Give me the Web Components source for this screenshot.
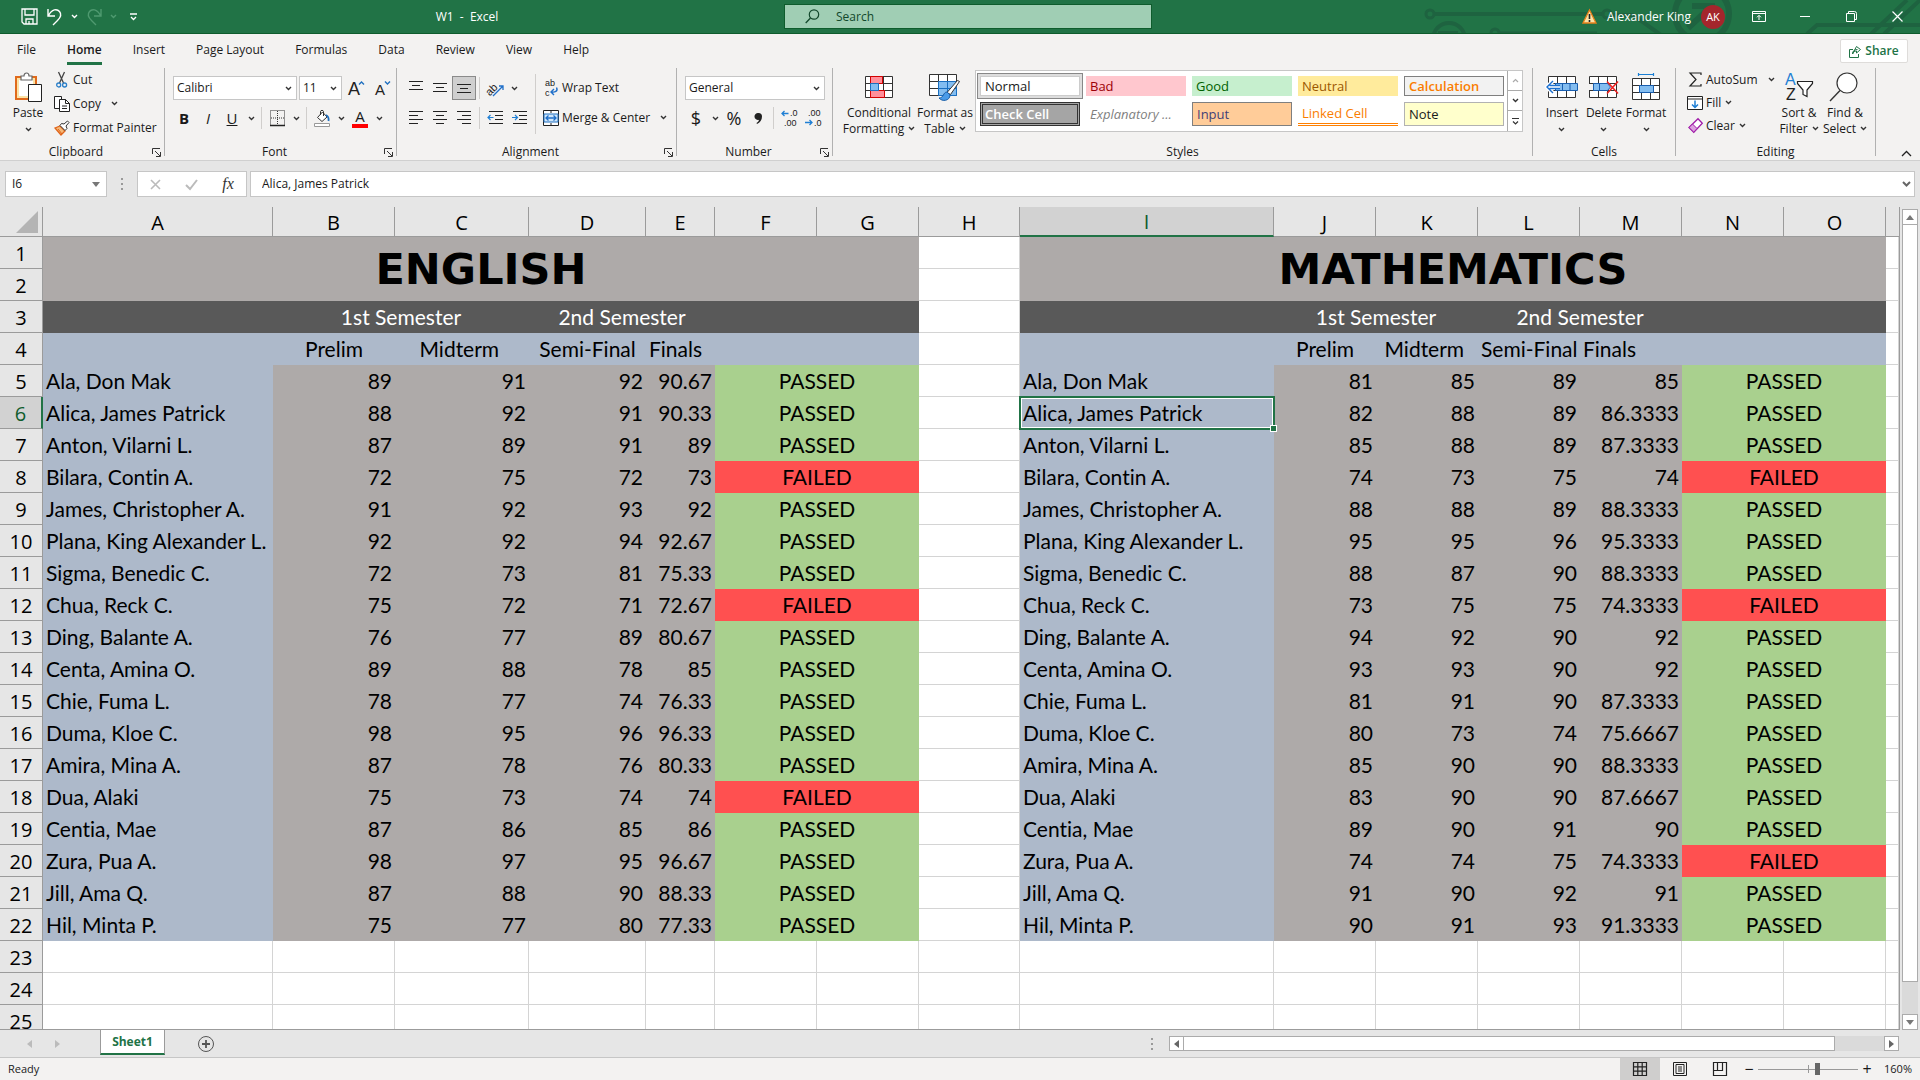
<!DOCTYPE html>
<html lang="en">
<head>
<meta charset="utf-8">
<title>W1 - Excel</title>
<style>
    html, body {
        margin: 0;
        height: 100%;
    }
    body {
        display: flex;
        flex-direction: column;
        overflow: hidden;
        background: #e6e6e6;
        color: #1a1a1a;
        font: 12px/16px "Open Sans", "Noto Sans", sans-serif;
        --green: #217346;
        --line: #c6c6c6;
    }
    sheet-grid {
        flex: 1;
        min-height: 0;
    }
</style>
</head>
<body>
<title-bar></title-bar>
<ribbon-tabs active="Home"></ribbon-tabs>
<ribbon-bar></ribbon-bar>
<formula-bar cell="I6" value="Alica, James Patrick"></formula-bar>
<sheet-grid></sheet-grid>
<sheet-tabs></sheet-tabs>
<status-bar></status-bar>

<script>
/** Icons: [width, height, markup] */
const chev = "M1 1l2.5 2.5L6 1";
const grid = (x, y) => `<path d="M${x} ${y}h27v21h-27zM${x} ${y + 7}h27M${x} ${y + 14}h27M${x + 9} ${y}v21M${x + 18} ${y}v21" fill="#fff" stroke="#333"/>`;
const bars = (rows) => rows.map(([x, y, w]) => `<path d="M${x} ${y}h${w}" stroke="#222"/>`).join("");
const letters = (x, y, size, text, fill = "#222") => `<text x="${x}" y="${y}" font-family="Liberation Sans" font-size="${size}" fill="${fill}">${text}</text>`;
const icons = {
    chevron: [7, 5, `<path d="${chev}" stroke="#333" stroke-width="1.4"/>`],
    chevronWhite: [7, 5, `<path d="${chev}" stroke="#fff" stroke-width="1.4"/>`],
    chevronDim: [7, 5, `<path d="${chev}" stroke="#4f9a70" stroke-width="1.4"/>`],
    chevronUp: [7, 5, `<path d="M1 4l2.5-2.5L6 4" stroke="#aaa" stroke-width="1.2"/>`],
    chevronBold: [9, 6, `<path d="M1 1l3.5 3.5L8 1" stroke="#666" stroke-width="2"/>`],
    collapse: [11, 7, `<path d="M1 6l4.500-4.500L10 6" stroke="#222" stroke-width="1.3"/>`],
    more: [9, 9, `<path d="M1 1.5h7M2 4.5l2.5 2.5L7 4.500" stroke="#333" stroke-width="1.2"/>`],
    moreWhite: [9, 8, `<path d="M1 1h7M2 4l2.5 2.5L7 4" stroke="#fff" stroke-width="1.3"/>`],
    triDown: [8, 5, `<path d="M0 0h8L4 5z" fill="#777"/>`],
    triUp: [8, 5, `<path d="M0 5h8L4 0z" fill="#777"/>`],
    triLeft: [5, 8, `<path d="M5 0v8L0 4z" fill="#666"/>`],
    triRight: [5, 8, `<path d="M0 0v8l5-4z" fill="#666"/>`],
    triLeftDim: [5, 8, `<path d="M5 0v8L0 4z" fill="#bbb"/>`],
    triRightDim: [5, 8, `<path d="M0 0v8l5-4z" fill="#bbb"/>`],
    dots: [2, 12, `<path d="M0 1h2M0 6h2M0 11h2" stroke="#999" stroke-width="2"/>`],
    save: [17, 17, `<path d="M1 1h15v15H3l-2-2zM4 1v6h9V1M5 16v-5h7v5M8 13v3" stroke="#fff" stroke-width="1.3"/>`],
    undo: [16, 18, `<path d="M1 1v7h7M1.5 7.5C5 1 10 .5 12.5 3.5s1 6-2 9L6 17" stroke="#fff" stroke-width="1.4"/>`],
    redo: [16, 18, `<path d="M15 1v7H8M14.500 7.500C11 1 6 .5 3.5 3.5s-1 6 2 9L10 17" stroke="#4f9a70" stroke-width="1.4"/>`],
    search: [15, 15, `<circle cx="9" cy="5.5" r="4.700" stroke="#12482b" stroke-width="1.2"/><path d="M5.500 9L.7 14" stroke="#12482b" stroke-width="1.3"/>`],
    warning: [15, 15, `<path d="M7.500 1L14 14H1z" fill="#fbe3a6" stroke="#e8801a" stroke-width="1.3"/><path d="M7.500 5v5M7.500 11v2" stroke="#222" stroke-width="1.6"/>`],
    display: [14, 11, `<path d="M.5.5h13v10H.5zM.5 2.5h13M7 9V4.500M5 6.300l2-2 2 2" stroke="#fff"/>`],
    minimise: [11, 11, `<path d="M0 5.5h10" stroke="#fff"/>`],
    restore: [11, 11, `<path d="M.5 2.5h8v8h-8zM2.5 2.5v-2h6a2 2 0 0 1 2 2v6h-2" stroke="#fff"/>`],
    close: [11, 11, `<path d="M.5.5l10 10M10.500.5l-10 10" stroke="#fff" stroke-width="1.2"/>`],
    share: [12, 13, `<path d="M4 4.500H.5v8h9V9M3.500 9c0-3 2-4.500 5-4.500M7.500 1.500l4 3-4 3.500V6C5.500 6 4.500 7 3.500 9z" stroke="#217346"/>`],
    paste: [28, 30, `<path d="M2 5h20v22H2z" fill="#fbe3a6" stroke="#e06a1c" stroke-width="2"/><path d="M5 8h14v16H5z" fill="#fff"/><path d="M7 8V4h3c0-4 5-4 5 0h3v4z" fill="#fff" stroke="#666" stroke-width="1.2"/><path d="M14.500 12.500h13v17h-13z" fill="#fff" stroke="#222"/>`],
    cut: [12, 16, `<path d="M2.500 0l5 11M8.500 0l-5 11" stroke="#444" stroke-width="1.3"/><circle cx="2.700" cy="13" r="2" stroke="#2a7fc9" stroke-width="1.3"/><circle cx="8.600" cy="13" r="2" stroke="#2a7fc9" stroke-width="1.3"/>`],
    copy: [16, 16, `<path d="M.5.5h7v12h-7z" fill="#fff" stroke="#222"/><path d="M5.500 3.500h6l4 4v8h-10z" fill="#fff" stroke="#222"/><path d="M11.500 3.500v4h4M8 10h5M8 12.500h5" stroke="#222"/>`],
    painter: [16, 16, `<path d="M1 8l5-2 5 5-4 4z" fill="#f5b878" stroke="#e0641a" stroke-width="1.3"/><path d="M4 9l4 5" stroke="#e0641a"/><path d="M6 5.500l5 5 2-2-1-2.500 3-3.500L13.500 1l-3.500 3-2.500-.5z" fill="#fff" stroke="#333"/>`],
    grow: [17, 17, letters(0, 15, 18, "A") + `<path d="M11 4.500l2.500-2.500L16 4.500" stroke="#1f6fbf" stroke-width="1.4"/>`],
    shrink: [17, 17, letters(1, 15, 15, "A") + `<path d="M11 1.500l2.500 2.500L16 1.500" stroke="#1f6fbf" stroke-width="1.4"/>`],
    borders: [15, 17, `<path d="M.5.5h14v15H.5zM7.500 1v15M1 8h14" stroke="#333" stroke-dasharray="1 1"/><path d="M0 15.500h15" stroke="#222" stroke-width="1.5"/>`],
    fill: [16, 17, `<path d="M3.500 7.500L8.500 2l4.500 5-5 4.500z" fill="#fff" stroke="#333"/><path d="M6.500 5V1.500c0-1.500 3-1.500 3 0V6" stroke="#333"/><path d="M12 5c2 1 3 3 2.500 6" stroke="#1f6fbf" stroke-width="1.8"/><path d="M.5 13.500h15v3H.5z" fill="#fff" stroke="#999"/>`],
    comma: [9, 13, `<path d="M4.500 1a3.500 3.500 0 0 1 3.500 3.500c0 3.500-2 6-5 7.500l-.5-1C4 10 5 9 5 7.800A3.500 3.500 0 1 1 4.500 1z" fill="#222"/>`],
    rotate: [17, 17, `<text x="-2" y="11" transform="rotate(-45 7 8)" font-family="Liberation Sans" font-size="11" fill="#222">ab</text><path d="M6 16L16 6M12 6h4v4" stroke="#1f6fc9" stroke-width="1.3"/>`],
    wrap: [14, 18, letters(1, 7, 9, "ab") + letters(1, 17, 9, "c") + `<path d="M12.500 8.500c2 4-2 5-5 4.500M10 10l-3 3 3 3" stroke="#1f6fc9" stroke-width="1.4"/>`],
    merge: [16, 16, `<path d="M.5.5h15v15H.5zM8 0v3M8 13v3" fill="#fff" stroke="#222"/><path d="M1 4h14v8H1z" fill="#cfe6fa" stroke="#1f6fbf"/><path d="M3 8h10M5.500 5.500L3 8l2.500 2.500M10.500 5.500L13 8l-2.500 2.500" stroke="#1f6fc9" stroke-width="1.3"/>`],
    top: [14, 16, bars([[0, 1.5, 14], [3, 5.5, 8], [0, 9.5, 14]])],
    middle: [14, 12, bars([[0, 1.5, 14], [3, 5.5, 8], [0, 9.5, 14]])],
    bottom: [14, 12, bars([[0, 2.5, 14], [3, 6.5, 8], [0, 10.5, 14]])],
    left: [14, 14, bars([[0, .5, 14], [0, 4.5, 9], [0, 8.5, 14], [0, 12.5, 9]])],
    center: [14, 14, bars([[0, .5, 14], [3, 4.5, 8], [0, 8.5, 14], [3, 12.5, 8]])],
    right: [14, 14, bars([[0, .5, 14], [5, 4.5, 9], [0, 8.5, 14], [5, 12.5, 9]])],
    outdent: [15, 14, bars([[1, .5, 14], [7, 4.5, 8], [7, 8.5, 8], [1, 12.5, 14]]) + `<path d="M5.500 6.500H0M2.500 4L0 6.500 2.500 9" stroke="#1f7fd4" stroke-width="1.2"/>`],
    indent: [15, 14, bars([[1, .5, 14], [7, 4.5, 8], [7, 8.5, 8], [1, 12.5, 14]]) + `<path d="M0 6.500h5.500M3 4l2.500 2.500L3 9" stroke="#1f7fd4" stroke-width="1.2"/>`],
    incDecimal: [16, 18, letters(9, 7, 9, ".0") + letters(3, 17, 9, ".00") + `<path d="M7.500 4.500H1M3.500 2L1 4.500 3.500 7" stroke="#1f7fd4" stroke-width="1.3"/>`],
    decDecimal: [16, 18, letters(3, 7, 9, ".00") + letters(9, 17, 9, ".0") + `<path d="M0 13.500h7M4.500 11L7 13.500 4.500 16" stroke="#1f7fd4" stroke-width="1.3"/>`],
    launcher: [9, 9, `<path d="M.5 6V.5H8M3 3l5 5M8.500 4v4.500H4" stroke="#333"/>`],
    conditional: [28, 22, grid(.5, .5) + `<path d="M5.500.5h12v7h-12zM5.500 14.500h14v7h-14z" fill="#ff8f9a" stroke="#d40000"/><path d="M5.500 7.500h8v7h-8z" fill="#83bdf0" stroke="#1a6fc0"/>`],
    formatTable: [32, 28, `${grid(.5, 1.5)}<path d="M9.500 8.500h18v14h-18z" fill="#83bdf0" stroke="#1a6fc0"/><path d="M9.500 15.500h18M18.500 8.500v14" stroke="#1a6fc0"/><path d="M28.500 7.500l2 1-9 13-3.500-2z" fill="#fff" stroke="#333"/><path d="M18 19c-4 0-3 6-8 6 3 4 11 3 11-3z" fill="#4a9be8" stroke="#1a5fa8"/>`],
    insert: [32, 24, `${grid(2.5, 1.5)}<path d="M9.500 8.500h22v7h-22z" fill="#83bdf0" stroke="#1a5fb0"/><path d="M16.500 8.500v7M24 8.500v7" stroke="#1a5fb0"/><path d="M14 12H1.500M7 6l-6 6 6 6" stroke="#fff" stroke-width="4"/><path d="M14 10.500H3.500M14 13.500H3.500M7 6l-6 6 6 6" stroke="#1a6fd0" stroke-width="1.4"/>`],
    remove: [32, 24, `${grid(1.5, 1.5)}<path d="M0 9h5v6H0z" fill="#f3f2f1"/><path d="M5.500 8.500h14l3 3.500-3 3.500h-14z" fill="#83bdf0" stroke="#1a5fb0"/><path d="M11.500 8.500v7" stroke="#1a5fb0"/><path d="M19 6.500l11 12M30 6.500l-11 12" stroke="#e22" stroke-width="1.6"/>`],
    format: [28, 28, `${grid(.5, 5.5)}<path d="M7.500 12.500h14v7h-14z" fill="#83bdf0" stroke="#1a5fb0"/><path d="M6.500 1.500h15M6.500 0v3M21.500 0v3" stroke="#1a7fd4" stroke-width="1.2"/>`],
    sum: [13, 15, `<path d="M12 3V1H1l6 6.500L1 14h11v-2" stroke="#222" stroke-width="1.2"/>`],
    fillDown: [16, 14, `<path d="M.5.5h15v13H.5zM.5 3h15" fill="#fff" stroke="#222"/><path d="M8 4.500v7M5 8.500l3 3 3-3" stroke="#1f7fd4" stroke-width="1.5"/>`],
    clear: [15, 15, `<path d="M10 .7l4.300 4.500-8.500 9L1 9.500z" fill="#fff" stroke="#a01ba8" stroke-width="1.3"/><path d="M4.500 6L1 9.500l4.800 4.700L9 10.500z" fill="#dba0df" stroke="#a01ba8"/>`],
    sort: [28, 28, letters(0, 12, 16, "A", "#1f7fd4") + letters(1, 27, 16, "Z") + `<path d="M12.500 8.500h15v2L22 17v6.500l-4-2V17l-5.500-6.500z" fill="#fff" stroke="#222" stroke-width="1.2"/>`],
    find: [26, 30, `<circle cx="15" cy="11" r="10" fill="#fff" stroke="#333" stroke-width="1.2"/><path d="M8 18.500L-2 29" stroke="#333" stroke-width="1.4"/>`],
    cancel: [11, 11, `<path d="M1 1l9 9M10 1l-9 9" stroke="#bbb" stroke-width="1.6"/>`],
    accept: [13, 11, `<path d="M1 6l4 4 7-9" stroke="#bbb" stroke-width="2"/>`],
    plus: [18, 18, `<circle cx="9" cy="9" r="7.500" stroke="#555"/><path d="M9 5v8M5 9h8" stroke="#555" stroke-width="1.8"/>`],
    normalView: [14, 14, `<path d="M.5.5h13v13H.5zM.5 4.800h13M.5 9.200h13M4.800.5v13M9.200.5v13" stroke="#222" stroke-width="1.2"/>`],
    pageView: [14, 14, `<path d="M.5.5h13v13H.5zM3 2.500h8v9H3zM5 5h4M5 7h4M5 9h4" stroke="#222"/>`],
    breakView: [14, 14, `<path d="M.5.5h13v13H.5zM4.500.5v8h5v-8M.5 8.500h4" stroke="#222" stroke-width="1.2"/>`]
};

class UiIcon extends HTMLElement {
    constructor() {
        super();
        this.attachShadow({ mode: "open" });
    }

    connectedCallback() {
        const [width, height, markup] = icons[this.getAttribute("name")];
        this.shadowRoot.innerHTML = `
            <style>
                :host { display: inline-flex; flex: none; }
                svg { display: block; overflow: visible; }
            </style>
            <svg width="${width}" height="${height}" viewBox="0 0 ${width} ${height}" fill="none" aria-hidden="true">${markup}</svg>
        `;
    }
}

/** Shared rules for flat buttons */
const buttonStyle = `
    button {
        display: inline-flex;
        align-items: center;
        justify-content: center;
        padding: 0;
        border: 0;
        background: none;
        color: inherit;
        font: inherit;
    }
`;

/** Title bar */
class TitleBar extends HTMLElement {
    constructor() {
        super();
        this.attachShadow({ mode: "open" });
        this.shadowRoot.innerHTML = `
            <style>
                ${buttonStyle}
                :host {
                    display: flex;
                    align-items: center;
                    position: relative;
                    height: 34px;
                    box-sizing: border-box;
                    border-bottom: 1px solid #0f5c2d;
                    background: var(--green);
                    color: #fff;
                    overflow: hidden;
                }
                .art { position: absolute; right: 0; top: 0; }
                .side { display: flex; flex: 49; align-items: center; height: 32px; position: relative; }
                .quick { display: flex; width: 150px; padding-left: 16px; box-sizing: border-box; }
                .quick button { width: 26px; height: 26px; }
                .quick .arrow { width: 13px; }
                .title { flex: 1; text-align: center; white-space: pre; }
                .search {
                    display: flex;
                    align-items: center;
                    gap: 16px;
                    width: 368px;
                    height: 25px;
                    padding-left: 20px;
                    box-sizing: border-box;
                    border: 1px solid #0f5c2d;
                    background: #a0ceb4;
                    position: relative;
                }
                input { flex: 1; min-width: 0; border: 0; padding: 0; background: none; font: inherit; outline: 0; }
                input::placeholder { color: #12482b; opacity: 1; }
                .end { flex: 48; justify-content: flex-end; }
                .user { gap: 10px; margin-right: 11px; }
                .avatar {
                    display: inline-flex;
                    align-items: center;
                    justify-content: center;
                    width: 24px;
                    height: 24px;
                    border-radius: 50%;
                    background: #a4262c;
                    font-size: 11px;
                }
                .window { width: 46px; height: 32px; }
            </style>
            <svg class="art" width="500" height="34" viewBox="1420 0 500 34" fill="none" stroke="#1e6340" stroke-width="4" aria-hidden="true">
                <circle cx="1430" cy="14" r="4" stroke-width="3"/><path d="M1434 14h168"/>
                <circle cx="1607" cy="14" r="4" stroke-width="3"/><path d="M1611 15h22l28 20"/>
                <circle cx="1449" cy="39" r="16"/><path d="M1438 33h18v8"/>
                <circle cx="1495" cy="33" r="4" stroke-width="3"/><path d="M1499 33h98" stroke-width="3"/>
                <circle cx="1702" cy="14" r="27" stroke-width="6"/><path d="M1688 28l24-22M1692 6h20v18" stroke-width="6"/>
                <path d="M1807 34l10-9h103M1871 34l36-34M1884 34l36-34"/>
            </svg>
            <div class="side">
                <div class="quick">
                    <button aria-label="Save"><ui-icon name="save"></ui-icon></button>
                    <button aria-label="Undo"><ui-icon name="undo"></ui-icon></button>
                    <button class="arrow" aria-label="Undo list"><ui-icon name="chevronWhite"></ui-icon></button>
                    <button aria-label="Redo"><ui-icon name="redo"></ui-icon></button>
                    <button class="arrow" aria-label="Redo list"><ui-icon name="chevronDim"></ui-icon></button>
                    <button aria-label="Customize toolbar"><ui-icon name="moreWhite"></ui-icon></button>
                </div>
                <div class="title">W1  -  Excel</div>
            </div>
            <label class="search"><ui-icon name="search"></ui-icon><input type="search" placeholder="Search" aria-label="Search"></label>
            <div class="side end">
                <button class="user"><ui-icon name="warning"></ui-icon>Alexander King<span class="avatar">AK</span></button>
                <button class="window" aria-label="Ribbon display options"><ui-icon name="display"></ui-icon></button>
                <button class="window" aria-label="Minimize"><ui-icon name="minimise"></ui-icon></button>
                <button class="window" aria-label="Restore"><ui-icon name="restore"></ui-icon></button>
                <button class="window" aria-label="Close"><ui-icon name="close"></ui-icon></button>
            </div>
        `;
    }
}

/** Ribbon tabs */
class RibbonTabs extends HTMLElement {
    constructor() {
        super();
        this.attachShadow({ mode: "open" });
    }

    connectedCallback() {
        const names = ["File", "Home", "Insert", "Page Layout", "Formulas", "Data", "Review", "View", "Help"];
        const active = this.getAttribute("active");
        this.shadowRoot.innerHTML = `
            <style>
                ${buttonStyle}
                :host {
                    display: flex;
                    justify-content: space-between;
                    align-items: center;
                    height: 34px;
                    padding: 0 12px 0 17px;
                    background: #f3f2f1;
                }
                nav { display: flex; gap: 31px; }
                nav button { height: 28px; border-bottom: 3px solid transparent; box-sizing: border-box; }
                nav .active { border-color: var(--green); font-weight: 600; }
                .share {
                    gap: 4px;
                    width: 68px;
                    height: 24px;
                    border: 1px solid #dedcda;
                    border-radius: 2px;
                    background: #fff;
                    color: var(--green);
                    font-weight: 600;
                }
            </style>
            <nav>${names.map((name) => `<button class="${name === active ? "active" : ""}">${name}</button>`).join("")}</nav>
            <button class="share"><ui-icon name="share"></ui-icon>Share</button>
        `;
    }
}

/** Ribbon group: body in the slot, caption below */
class RibbonGroup extends HTMLElement {
    constructor() {
        super();
        this.attachShadow({ mode: "open" });
        this.shadowRoot.innerHTML = `
            <style>
                ${buttonStyle}
                :host { display: flex; flex: none; box-sizing: border-box; }
                .content { flex: 1; min-width: 0; }
                .body { display: flex; height: 76px; box-sizing: border-box; }
                .caption { display: flex; text-align: center; }
                .name { flex: 1; }
                .launch { padding-right: 3px; }
                .line { width: 1px; margin-bottom: 4px; background: #b1b1b1; }
            </style>
            <div class="content">
                <div class="body"><slot></slot></div>
                <div class="caption"><span class="name"></span></div>
            </div>
            <div class="line"></div>
        `;
    }

    connectedCallback() {
        const label = this.getAttribute("label");
        this.shadowRoot.querySelector(".name").textContent = label;
        if (this.hasAttribute("launcher")) {
            this.shadowRoot.querySelector(".caption").insertAdjacentHTML("beforeend",
                `<button class="launch" aria-label="${label} settings"><ui-icon name="launcher"></ui-icon></button>`);
        }
    }
}

/** Ribbon button: small by default, "large" puts the icon on top */
class RibbonButton extends HTMLElement {
    constructor() {
        super();
        this.attachShadow({ mode: "open" });
    }

    connectedCallback() {
        const icon = this.getAttribute("icon");
        const arrow = this.getAttribute("arrow");
        this.shadowRoot.innerHTML = `
            <style>
                ${buttonStyle}
                :host { display: inline-flex; flex: none; }
                button { width: 100%; height: var(--row, 24px); justify-content: flex-start; white-space: nowrap; }
                .icon { display: inline-flex; flex: none; width: 22px; justify-content: center; }
                .arrow { margin-left: 10px; vertical-align: 2px; }
                :host([large]) button { flex-direction: column; height: 72px; }
                :host([large]) .icon { width: auto; height: 37px; align-items: center; }
                .below { display: flex; height: 16px; align-items: center; justify-content: center; }
                :host([large]) .arrow, :host([tight]) .arrow { margin-left: 4px; }
            </style>
            <button>
                <span class="icon"><ui-icon name="${icon}"></ui-icon></span>
                <span><slot></slot>${arrow === "inline" ? `<ui-icon class="arrow" name="chevron"></ui-icon>` : ""}${arrow === "below" ? `<span class="below"><ui-icon name="chevron"></ui-icon></span>` : ""}</span>
            </button>
        `;
    }
}

/** Drop-down with its own arrow */
class DropBox extends HTMLElement {
    constructor() {
        super();
        this.attachShadow({ mode: "open" });
    }

    connectedCallback() {
        this.shadowRoot.innerHTML = `
            <style>
                :host {
                    display: grid;
                    grid-template-columns: 1fr 11px;
                    align-items: center;
                    height: 24px;
                    box-sizing: border-box;
                    border: 1px solid var(--line);
                    background: #fff;
                }
                select {
                    grid-column: 1 / 3;
                    grid-row: 1;
                    appearance: none;
                    border: 0;
                    padding: 0 3px;
                    background: none;
                    color: inherit;
                    font: inherit;
                }
                ui-icon { grid-column: 2; grid-row: 1; pointer-events: none; }
            </style>
            <select aria-label="${this.getAttribute("label")}"><option>${this.getAttribute("value")}</option></select>
            <ui-icon name="chevron"></ui-icon>
        `;
    }
}

/** Cell style gallery */
class StyleGallery extends HTMLElement {
    constructor() {
        super();
        this.attachShadow({ mode: "open" });
        this.shadowRoot.innerHTML = `
            <style>
                ${buttonStyle}
                :host { display: flex; flex: 1; height: 62px; border: 1px solid var(--line); background: #fff; box-sizing: border-box; }
                .items {
                    display: grid;
                    flex: 1;
                    grid-template-columns: repeat(5, 1fr);
                    gap: 6px;
                    padding: 5px 3px 5px 4px;
                }
                .items button { justify-content: flex-start; padding-left: 4px; box-sizing: border-box; font-size: 13px; white-space: nowrap; }
                .normal { outline: 1px solid #888; outline-offset: 2px; box-shadow: 0 0 0 2px #ddd; border: 1px solid #ccc; }
                .bad { background: #ffc7ce; color: #9c0006; }
                .good { background: #c6efce; color: #006100; }
                .neutral { background: #ffeb9c; color: #9c5700; }
                .items .calculation { background: #f2f2f2; color: #fa7d00; border: 1px solid #7f7f7f; font-weight: 600; }
                .items .check { background: #a5a5a5; color: #fff; border: 3px double #333; padding-left: 2px; font-weight: 600; }
                .explanatory { color: #7f7f7f; font-style: italic; }
                .items .input { background: #ffcc99; color: #3f3f76; border: 1px solid #7f7f7f; }
                .items .linked { color: #fa7d00; border-bottom: 3px double #ff8001; }
                .items .note { background: #ffffcc; border: 1px solid #b2b2b2; }
                .scroll { display: grid; grid-template-rows: repeat(3, 1fr); width: 15px; }
                .scroll button { border: 1px solid #aaa; border-width: 0 0 1px 1px; }
                .scroll button:last-child { border-bottom: 0; }
            </style>
            <div class="items">
                <button class="normal">Normal</button>
                <button class="bad">Bad</button>
                <button class="good">Good</button>
                <button class="neutral">Neutral</button>
                <button class="calculation">Calculation</button>
                <button class="check">Check Cell</button>
                <button class="explanatory">Explanatory ...</button>
                <button class="input">Input</button>
                <button class="linked">Linked Cell</button>
                <button class="note">Note</button>
            </div>
            <div class="scroll">
                <button aria-label="Previous styles"><ui-icon name="chevronUp"></ui-icon></button>
                <button aria-label="Next styles"><ui-icon name="chevron"></ui-icon></button>
                <button aria-label="All styles"><ui-icon name="more"></ui-icon></button>
            </div>
        `;
    }
}

/** Ribbon */
const tool = (name, label, className = "") => `<button class="tool ${className}" aria-label="${label}"><ui-icon name="${name}"></ui-icon></button>`;
const arrow = (label) => `<button class="drop" aria-label="${label}"><ui-icon name="chevron"></ui-icon></button>`;
const rule = `<span class="rule"></span>`;

class RibbonBar extends HTMLElement {
    constructor() {
        super();
        this.attachShadow({ mode: "open" });
        this.shadowRoot.innerHTML = `
            <style>
                ${buttonStyle}
                :host { display: flex; height: 92px; border-bottom: 1px solid #d0d0d0; background: #f3f2f1; }
                .clipboard { width: 165px; }
                .font { width: 232px; }
                .alignment { width: 280px; }
                .number { width: 156px; }
                .styles { flex: 1; }
                .cells { width: 143px; }
                .editing { width: 200px; }
                .paste { width: 51px; padding-left: 5px; box-sizing: border-box; }
                .stack { display: flex; flex-direction: column; }
                .edits { --row: 23px; width: 100px; padding-left: 8px; box-sizing: border-box; }
                .rows { display: flex; flex-direction: column; gap: 6px; padding: 8px 0 0 8px; }
                .texts { padding-left: 0; }
                .row { display: flex; align-items: center; height: 24px; margin-left: -1px; }
                .boxes { gap: 2px; margin-left: 0; }
                .tool { width: 24px; height: 24px; }
                .drop { width: 14px; height: 24px; }
                .on { border: 1px solid #8a8a8a; background: #cfcfcf; box-sizing: border-box; }
                .rule { width: 1px; height: 22px; margin: 0 3px; background: #d0cecc; }
                .tall { height: 60px; margin: 6px 4px 0; }
                .letter { font-size: 15px; }
                .symbol { font-size: 18px; }
                .fontcolor { border-bottom: 4px solid #f00; width: 16px; line-height: 15px; font-size: 15px; }
                .face { width: 124px; }
                .size { width: 43px; }
                .format { width: 140px; }
                .narrow { width: 42px; }
                .conditional { width: 84px; margin-left: 4px; }
                .table { width: 48px; }
                .pair { width: 46px; }
                .cells .narrow:first-child { margin-left: 8px; }
                style-gallery { margin: 2px 9px 0 6px; }
                .collapse { flex: none; width: 44px; align-items: flex-end; padding: 0 0 3px 16px; box-sizing: border-box; }
            </style>
            <ribbon-group class="clipboard" label="Clipboard" launcher>
                <ribbon-button class="paste" large icon="paste" arrow="below">Paste</ribbon-button>
                <div class="stack">
                    <ribbon-button icon="cut">Cut</ribbon-button>
                    <ribbon-button icon="copy" arrow="inline">Copy</ribbon-button>
                    <ribbon-button icon="painter">Format Painter</ribbon-button>
                </div>
            </ribbon-group>
            <ribbon-group class="font" label="Font" launcher>
                <div class="rows">
                    <div class="row boxes">
                        <drop-box class="face" label="Font" value="Calibri"></drop-box>
                        <drop-box class="size" label="Font size" value="11"></drop-box>
                        ${tool("grow", "Increase font size")}${tool("shrink", "Decrease font size")}
                    </div>
                    <div class="row">
                        <button class="tool letter"><b>B</b></button>
                        <button class="tool letter"><i>I</i></button>
                        <button class="tool letter"><u>U</u></button>
                        ${arrow("Underline styles")}${rule}${tool("borders", "Borders")}${arrow("Border styles")}${rule}
                        ${tool("fill", "Fill color")}${arrow("Fill colors")}
                        <button class="tool" aria-label="Font color"><span class="fontcolor">A</span></button>
                        ${arrow("Font colors")}
                    </div>
                </div>
            </ribbon-group>
            <ribbon-group class="alignment" label="Alignment" launcher>
                <div class="rows">
                    <div class="row">${tool("top", "Top align")}${tool("middle", "Middle align")}${tool("bottom", "Bottom align", "on")}${rule}${tool("rotate", "Orientation")}${arrow("Orientation styles")}</div>
                    <div class="row">${tool("left", "Align left")}${tool("center", "Center")}${tool("right", "Align right")}${rule}${tool("outdent", "Decrease indent")}${tool("indent", "Increase indent")}</div>
                </div>
                <span class="rule tall"></span>
                <div class="rows texts">
                    <ribbon-button icon="wrap">Wrap Text</ribbon-button>
                    <ribbon-button icon="merge" arrow="inline">Merge &amp; Center</ribbon-button>
                </div>
            </ribbon-group>
            <ribbon-group class="number" label="Number" launcher>
                <div class="rows">
                    <drop-box class="format" label="Number format" value="General"></drop-box>
                    <div class="row">
                        <button class="tool symbol">$</button>${arrow("Currencies")}
                        <button class="tool symbol">%</button>
                        ${tool("comma", "Comma style")}${rule}${tool("incDecimal", "Increase decimal")}${tool("decDecimal", "Decrease decimal")}
                    </div>
                </div>
            </ribbon-group>
            <ribbon-group class="styles" label="Styles">
                <ribbon-button class="conditional" large icon="conditional" arrow="inline">Conditional<br>Formatting</ribbon-button>
                <ribbon-button class="table" large icon="formatTable" arrow="inline">Format as<br>Table</ribbon-button>
                <style-gallery></style-gallery>
            </ribbon-group>
            <ribbon-group class="cells" label="Cells">
                <ribbon-button class="narrow" large icon="insert" arrow="below">Insert</ribbon-button>
                <ribbon-button class="narrow" large icon="remove" arrow="below">Delete</ribbon-button>
                <ribbon-button class="narrow" large icon="format" arrow="below">Format</ribbon-button>
            </ribbon-group>
            <ribbon-group class="editing" label="Editing">
                <div class="stack edits">
                    <ribbon-button icon="sum" arrow="inline">AutoSum</ribbon-button>
                    <ribbon-button icon="fillDown" arrow="inline" tight>Fill</ribbon-button>
                    <ribbon-button icon="clear" arrow="inline" tight>Clear</ribbon-button>
                </div>
                <ribbon-button class="pair" large icon="sort" arrow="inline">Sort &amp;<br>Filter</ribbon-button>
                <ribbon-button class="pair" large icon="find" arrow="inline">Find &amp;<br>Select</ribbon-button>
            </ribbon-group>
            <button class="collapse" aria-label="Collapse ribbon"><ui-icon name="collapse"></ui-icon></button>
        `;
    }
}

/** Formula bar */
class FormulaBar extends HTMLElement {
    constructor() {
        super();
        this.attachShadow({ mode: "open" });
    }

    connectedCallback() {
        this.shadowRoot.innerHTML = `
            <style>
                ${buttonStyle}
                :host { display: flex; align-items: center; gap: 3px; height: 46px; padding: 0 5px; box-sizing: border-box; }
                .box { display: flex; align-items: center; height: 26px; box-sizing: border-box; border: 1px solid var(--line); background: #fff; }
                .name { width: 102px; padding-right: 6px; }
                .tools { width: 110px; justify-content: space-around; }
                .formula { flex: 1; padding-right: 3px; }
                .dots { display: flex; justify-content: center; width: 24px; }
                input { flex: 1; min-width: 0; border: 0; padding: 0 0 0 6px; outline: 0; background: none; color: inherit; font: inherit; }
                .formula input { padding-left: 11px; }
                .fx { font: italic 16px/16px "Liberation Serif", serif; color: #333; }
            </style>
            <div class="box name">
                <input aria-label="Name box" value="${this.getAttribute("cell")}">
                <button aria-label="Names"><ui-icon name="triDown"></ui-icon></button>
            </div>
            <span class="dots"><ui-icon name="dots"></ui-icon></span>
            <div class="box tools">
                <button aria-label="Cancel"><ui-icon name="cancel"></ui-icon></button>
                <button aria-label="Enter"><ui-icon name="accept"></ui-icon></button>
                <button class="fx">fx</button>
            </div>
            <div class="box formula">
                <input aria-label="Formula" value="${this.getAttribute("value")}">
                <button aria-label="Expand"><ui-icon name="chevronBold"></ui-icon></button>
            </div>
        `;
    }
}

/** Sheet */
const students = [
    // name, English grades, result, Mathematics grades, result
    ["Ala, Don Mak", [89, 91, 92, "90.67"], true, [81, 85, 89, "85"], true],
    ["Alica, James Patrick", [88, 92, 91, "90.33"], true, [82, 88, 89, "86.3333"], true],
    ["Anton, Vilarni L.", [87, 89, 91, "89"], true, [85, 88, 89, "87.3333"], true],
    ["Bilara, Contin A.", [72, 75, 72, "73"], false, [74, 73, 75, "74"], false],
    ["James, Christopher A.", [91, 92, 93, "92"], true, [88, 88, 89, "88.3333"], true],
    ["Plana, King Alexander L.", [92, 92, 94, "92.67"], true, [95, 95, 96, "95.3333"], true],
    ["Sigma, Benedic C.", [72, 73, 81, "75.33"], true, [88, 87, 90, "88.3333"], true],
    ["Chua, Reck C.", [75, 72, 71, "72.67"], false, [73, 75, 75, "74.3333"], false],
    ["Ding, Balante A.", [76, 77, 89, "80.67"], true, [94, 92, 90, "92"], true],
    ["Centa, Amina O.", [89, 88, 78, "85"], true, [93, 93, 90, "92"], true],
    ["Chie, Fuma L.", [78, 77, 74, "76.33"], true, [81, 91, 90, "87.3333"], true],
    ["Duma, Kloe C.", [98, 95, 96, "96.33"], true, [80, 73, 74, "75.6667"], true],
    ["Amira, Mina A.", [87, 78, 76, "80.33"], true, [85, 90, 90, "88.3333"], true],
    ["Dua, Alaki", [75, 73, 74, "74"], false, [83, 90, 90, "87.6667"], true],
    ["Centia, Mae", [87, 86, 85, "86"], true, [89, 90, 91, "90"], true],
    ["Zura, Pua A.", [98, 97, 95, "96.67"], true, [74, 74, 75, "74.3333"], false],
    ["Jill, Ama Q.", [87, 88, 90, "88.33"], true, [91, 90, 92, "91"], true],
    ["Hil, Minta P.", [75, 77, 80, "77.33"], true, [90, 91, 93, "91.3333"], true]
];
const columns = [43, 230, 122, 134, 117, 69, 102, 102, 101, 254, 102, 102, 102, 102, 102, 102];
const selectedRow = 6;
const selectedColumn = "I";

class SheetGrid extends HTMLElement {
    constructor() {
        super();
        this.attachShadow({ mode: "open" });
        this.shadowRoot.innerHTML = `
            <style>
                ${buttonStyle}
                :host { display: flex; overflow: hidden; }
                .view { flex: 1; overflow: hidden; border-right: 1px solid #9b9b9b; border-bottom: 1px solid #9b9b9b; }
                table {
                    width: 100%;
                    table-layout: fixed;
                    border-collapse: separate;
                    border-spacing: 0;
                    background: #fff;
                    color: #000;
                    font: 21px/24px Lato, sans-serif;
                    font-variant-ligatures: none;
                }
                th, td {
                    height: 32px;
                    box-sizing: border-box;
                    padding: 0 3px;
                    border: 0 solid #d4d4d4;
                    border-width: 0 1px 1px 0;
                    white-space: pre;
                    text-align: left;
                }
                th { background: #e6e6e6; border-color: #9b9b9b; font: 20px/24px "Open Sans", sans-serif; text-align: center; padding: 2px 0 0; }
                thead th { height: 30px; }
                thead th:last-child { border-right: 0; }
                thead .on { background: #d2d2d2; border-bottom: 2px solid var(--green); color: #0f5c2d; }
                tbody .on { background: #d2d2d2; border-right: 2px solid var(--green); color: #0f5c2d; }
                .corner { text-align: right; vertical-align: bottom; line-height: 0; padding: 0 4px 3px 0; }
                .title, .dark, .blue, .grade, .pass, .fail { border: 0; }
                .title { background: #aeaaa9; text-align: center; font: bold 43px/48px "DejaVu Sans", sans-serif; padding: 0; }
                .dark { background: #595959; color: #fff; }
                .blue { background: #adb9ca; }
                .grade { background: #aeaaa9; text-align: right; }
                .pass { background: #a9d08e; text-align: center; }
                .fail { background: #ff5050; text-align: center; }
                .mid { text-align: center; }
                .selected { position: relative; }
                .selected::before {
                    content: "";
                    position: absolute;
                    inset: -1px;
                    border: 2px solid var(--green);
                    box-shadow: inset 0 0 0 1px #fff;
                }
                .selected::after {
                    content: "";
                    position: absolute;
                    right: -3px;
                    bottom: -3px;
                    width: 5px;
                    height: 5px;
                    border: 1px solid #fff;
                    background: var(--green);
                }
                .scroll { display: flex; flex-direction: column; width: 16px; margin: 2px 2px 0; }
                .scroll button { height: 16px; border: 1px solid #ababab; background: #fff; }
                .track { display: flex; flex: 1; flex-direction: column; background: #dadada; }
                .thumb { height: 96%; box-sizing: border-box; border: 1px solid #ababab; border-top: 0; background: #fff; }
            </style>
            <div class="view"></div>
            <div class="scroll">
                <button aria-label="Scroll up"><ui-icon name="triUp"></ui-icon></button>
                <div class="track"><div class="thumb"></div></div>
                <button aria-label="Scroll down"><ui-icon name="triDown"></ui-icon></button>
            </div>
        `;
    }

    connectedCallback() {
        const head = [..."ABCDEFGHIJKLMNO"].map((letter) => `<th class="${letter === selectedColumn ? "on" : ""}">${letter}</th>`).join("");
        const rows = Array.from({ length: 25 }, (_, i) => this.renderRow(i + 1)).join("");
        this.shadowRoot.querySelector(".view").innerHTML = `
            <table>
                <colgroup>${columns.map((width) => `<col style="width: ${width}px">`).join("")}<col></colgroup>
                <thead><tr>
                    <th class="corner"><svg width="22" height="22"><path d="M22 0v22H0z" fill="#b4b4b4"/></svg></th>${head}<th></th>
                </tr></thead>
                <tbody>${rows}</tbody>
            </table>
        `;
    }

    renderRow(n) {
        return `<tr><th class="${n === selectedRow ? "on" : ""}">${n}</th>${this.renderCells(n)}</tr>`;
    }

    renderCells(n) {
        const gap = "<td></td>";
        if (n === 1) {
            return `<td class="title" colspan="7" rowspan="2">ENGLISH</td>${gap}<td class="title" colspan="7" rowspan="2">MATHEMATICS</td>${gap}`;
        }
        if (n === 2) return gap + gap;
        if (n === 3) {
            const half = `<td class="dark"></td><td class="dark mid" colspan="2">1st Semester</td><td class="dark mid" colspan="2">2nd Semester</td><td class="dark" colspan="2"></td>`;
            return half + gap + half + gap;
        }
        if (n === 4) {
            const half = `<td class="blue"></td><td class="blue mid">Prelim</td><td class="blue mid">Midterm </td><td class="blue mid">Semi-Final</td><td class="blue">Finals</td><td class="blue" colspan="2"></td>`;
            return half + gap + half + gap;
        }
        const student = students[n - 5];
        if (!student) return gap.repeat(16);
        const [name, english, englishPass, maths, mathsPass] = student;
        return this.renderHalf(name, english, englishPass, false) + gap +
            this.renderHalf(name, maths, mathsPass, n === selectedRow) + gap;
    }

    renderHalf(name, grades, passed, selected) {
        const result = passed ? `<td class="pass" colspan="2">PASSED</td>` : `<td class="fail" colspan="2">FAILED</td>`;
        return `<td class="blue ${selected ? "selected" : ""}">${name}</td>` +
            grades.map((grade) => `<td class="grade">${grade}</td>`).join("") + result;
    }
}

/** Sheet tabs and horizontal scroll */
class SheetTabs extends HTMLElement {
    constructor() {
        super();
        this.attachShadow({ mode: "open" });
        this.shadowRoot.innerHTML = `
            <style>
                ${buttonStyle}
                :host { display: flex; height: 27px; padding-right: 21px; }
                .tabs { display: flex; flex: 20; align-items: flex-start; }
                .tabs button { width: 29px; height: 27px; }
                .tabs .first { padding-left: 15px; width: 43px; box-sizing: border-box; }
                .tabs .sheet {
                    width: 65px;
                    height: 25px;
                    margin: 0 26px 0 28px;
                    box-sizing: border-box;
                    border: 1px solid #9b9b9b;
                    border-width: 0 1px 2px;
                    border-bottom-color: var(--green);
                    background: #fff;
                    color: var(--green);
                    font-weight: 700;
                }
                .scroll { display: flex; align-items: center; flex: 13; gap: 16px; }
                .bar { display: flex; flex: 1; height: 15px; }
                .bar button { width: 15px; border: 1px solid #ababab; background: #fff; box-sizing: border-box; }
                .track { flex: 1; background: #dadada; }
                .thumb { width: 93%; height: 15px; box-sizing: border-box; border: 1px solid #ababab; border-left: 0; background: #fff; }
            </style>
            <div class="tabs">
                <button class="first" aria-label="Previous sheet"><ui-icon name="triLeftDim"></ui-icon></button>
                <button aria-label="Next sheet"><ui-icon name="triRightDim"></ui-icon></button>
                <button class="sheet">Sheet1</button>
                <button aria-label="New sheet"><ui-icon name="plus"></ui-icon></button>
            </div>
            <div class="scroll">
                <ui-icon name="dots"></ui-icon>
                <div class="bar">
                    <button aria-label="Scroll left"><ui-icon name="triLeft"></ui-icon></button>
                    <div class="track"><div class="thumb"></div></div>
                    <button aria-label="Scroll right"><ui-icon name="triRight"></ui-icon></button>
                </div>
            </div>
        `;
    }
}

/** Status bar */
class StatusBar extends HTMLElement {
    constructor() {
        super();
        this.attachShadow({ mode: "open" });
        this.shadowRoot.innerHTML = `
            <style>
                ${buttonStyle}
                :host {
                    display: flex;
                    align-items: center;
                    height: 23px;
                    padding: 0 8px;
                    box-sizing: border-box;
                    border-top: 1px solid var(--line);
                    background: #f3f2f1;
                    font-size: 11px;
                }
                .state { flex: 1; }
                .view { width: 40px; height: 22px; }
                .on { background: #cfcecd; }
                .step { width: 18px; height: 22px; font-size: 16px; }
                input {
                    appearance: none;
                    width: 100px;
                    height: 12px;
                    margin: 0;
                    background:
                        linear-gradient(#999, #999) center / 1px 8px no-repeat,
                        linear-gradient(#999, #999) center / 100% 1px no-repeat;
                }
                input::-webkit-slider-thumb { appearance: none; width: 5px; height: 12px; background: #666; }
                label { display: flex; }
                .percent { width: 36px; text-align: right; }
            </style>
            <span class="state">Ready</span>
            <button class="view on" aria-label="Normal"><ui-icon name="normalView"></ui-icon></button>
            <button class="view" aria-label="Page layout"><ui-icon name="pageView"></ui-icon></button>
            <button class="view" aria-label="Page break preview"><ui-icon name="breakView"></ui-icon></button>
            <button class="step" aria-label="Zoom out">−</button>
            <label><input type="range" min="0" max="100" value="60" aria-label="Zoom"></label>
            <button class="step" aria-label="Zoom in">+</button>
            <span class="percent">160%</span>
        `;
    }
}

customElements.define("ui-icon", UiIcon);
customElements.define("title-bar", TitleBar);
customElements.define("ribbon-tabs", RibbonTabs);
customElements.define("ribbon-group", RibbonGroup);
customElements.define("ribbon-button", RibbonButton);
customElements.define("drop-box", DropBox);
customElements.define("style-gallery", StyleGallery);
customElements.define("ribbon-bar", RibbonBar);
customElements.define("formula-bar", FormulaBar);
customElements.define("sheet-grid", SheetGrid);
customElements.define("sheet-tabs", SheetTabs);
customElements.define("status-bar", StatusBar);
</script>
</body>
</html>
